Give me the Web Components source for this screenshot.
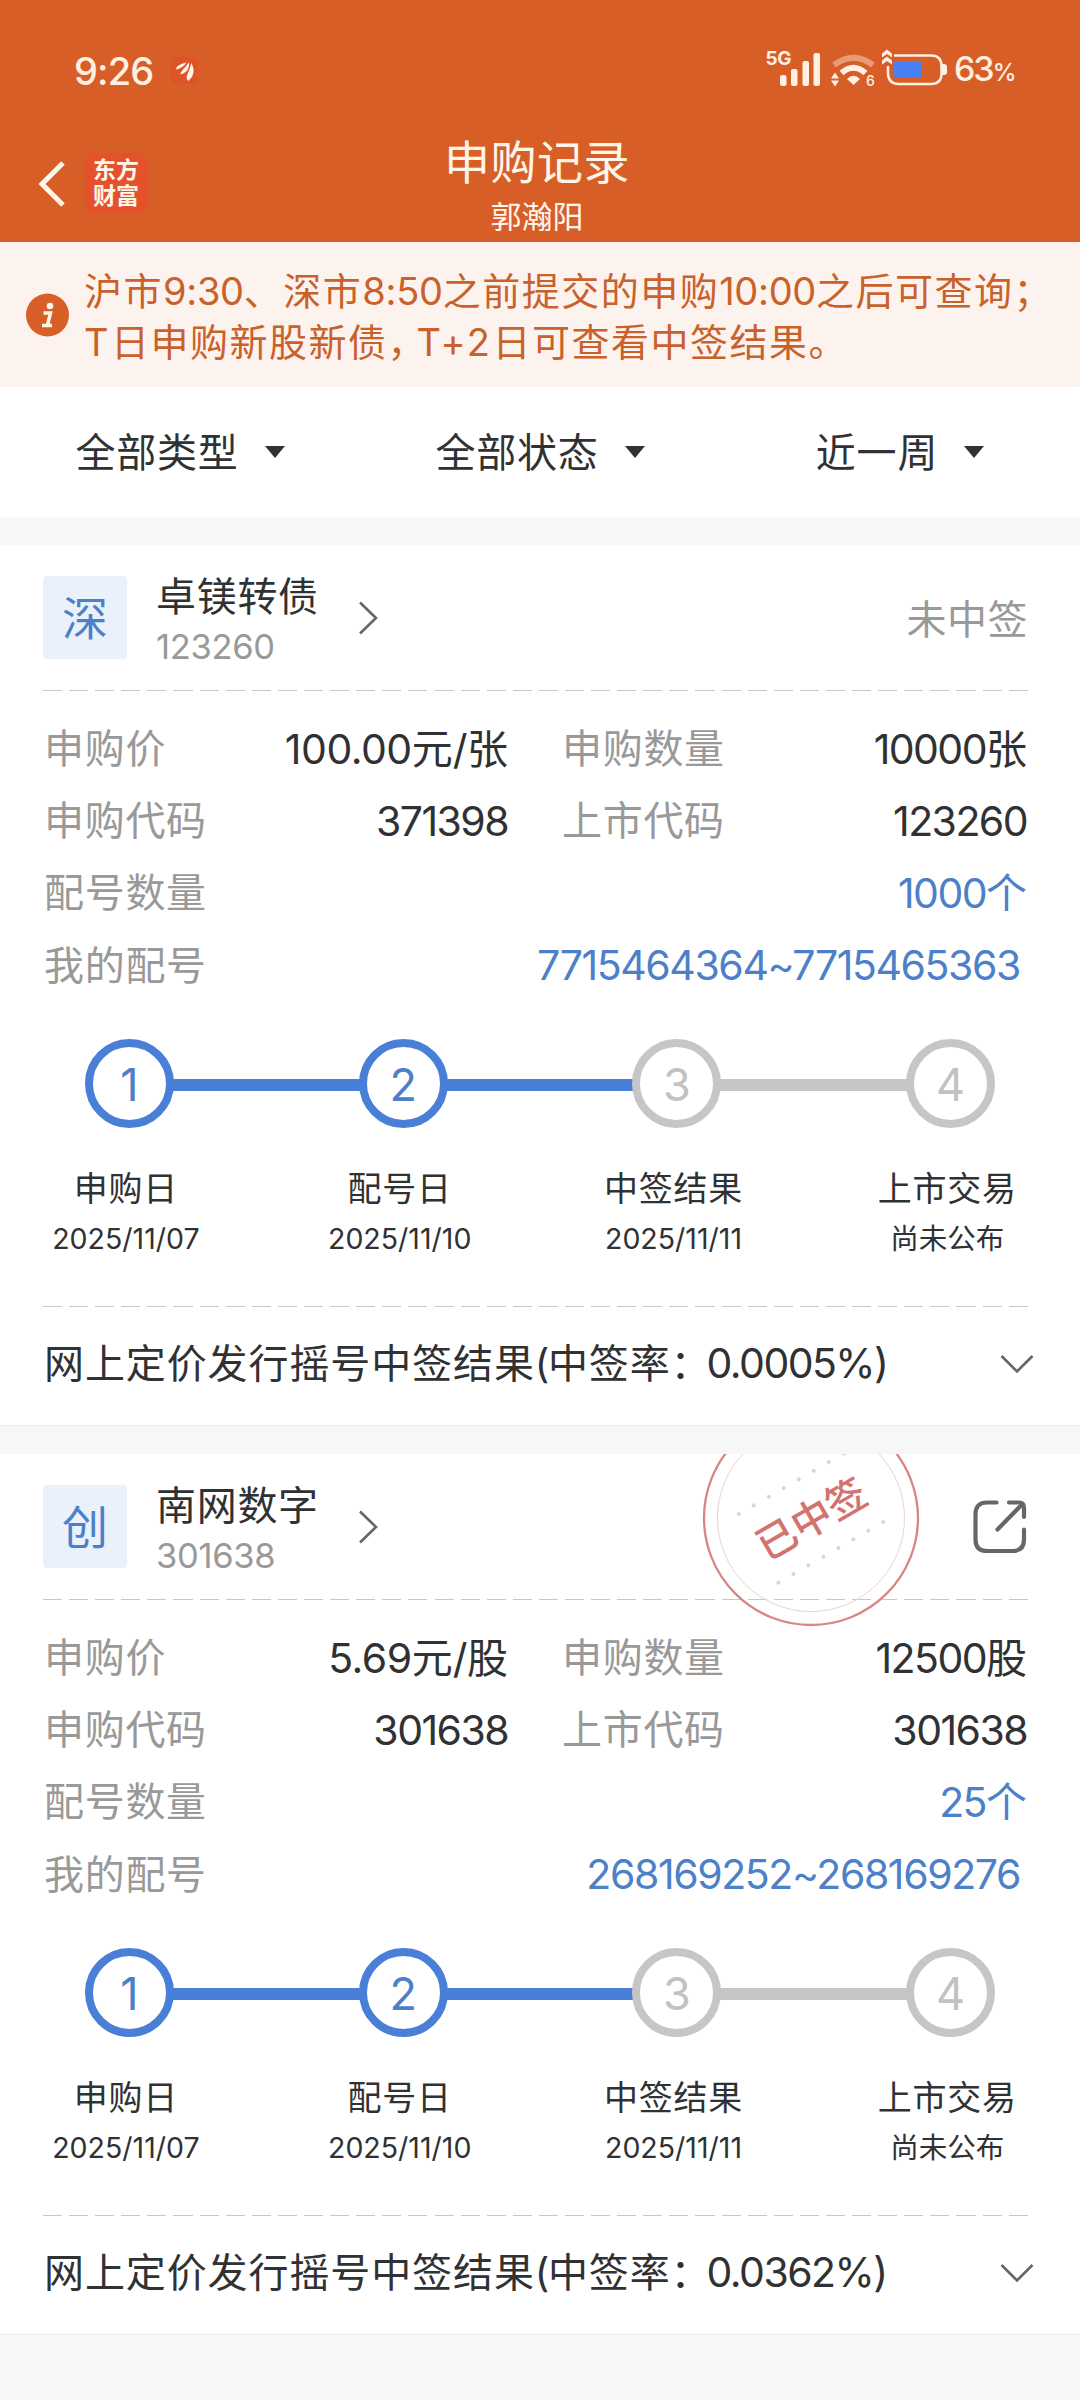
<!DOCTYPE html>
<html lang="zh-CN">
<head>
<meta charset="utf-8">
<title>申购记录</title>
<style>
  body{margin:0;width:1080px;height:2400px;overflow:hidden;background:#f6f7f9;color:#303133;font-family:Inter,"Noto Sans CJK SC",sans-serif;font-size:40px}
</style>
</head>
<body>
<status-bar time="9:26" level="63"></status-bar>
<nav-bar heading="申购记录">郭瀚阳</nav-bar>
<notice-bar>
  <notice-line>沪市9:30、深市8:50之前提交的申购10:00之后可查询；</notice-line>
  <notice-line class="wide">T日申购新股新债，T+2日可查看中签结果。</notice-line>
</notice-bar>
<filter-bar>
  <filter-item>全部类型</filter-item>
  <filter-item>全部状态</filter-item>
  <filter-item>近一周</filter-item>
</filter-bar>
<record-card market="深" name="卓镁转债" code="123260" price="100.00元/张" amount="10000张" apply="371398" listing="123260" count="1000个" numbers="7715464364~7715465363" rate="0.0005%">
  <span slot="status">未中签</span>
</record-card>
<record-card market="创" name="南网数字" code="301638" price="5.69元/股" amount="12500股" apply="301638" listing="301638" count="25个" numbers="268169252~268169276" rate="0.0362%">
  <win-stamp slot="stamp">已中签</win-stamp>
  <share-icon slot="status"></share-icon>
</record-card>

<script>
const NUM_CSS = `.n{letter-spacing:var(--num-ls,-.038em)}.p{letter-spacing:var(--punct-ls,-4px)}`;
const num = (s) => String(s).trim()
  .replace(/[\x21-\x7e]+/g, (m) => `<span class="n">${m}</span>`)
  .replace(/[，：]/g, (m) => `<span class="p">${m}</span>`);

class BaseElement extends HTMLElement {
  constructor() {
    super();
    this.attachShadow({ mode: "open" });
  }
  connectedCallback() {
    this.shadowRoot.innerHTML = `<style>${NUM_CSS}</style>` + this.render();
  }
  attr(name) {
    return this.getAttribute(name) ?? "";
  }
}

class StatusBar extends BaseElement {
  render() {
    return `
      <style>
        :host{display:flex;align-items:center;height:140px;box-sizing:border-box;padding:0 65px 0 74px;background:#d75f27;color:#fff0e2}
        .time{font-size:38px;font-weight:500;letter-spacing:-.9px;line-height:44px;padding-top:1px}
        .app{margin-left:18px}
        .icons{margin-left:auto}
        .pct{margin-left:4px;font-size:34px;font-weight:500;line-height:40px;white-space:nowrap;letter-spacing:-2px;padding-top:1px}
        .pct small{font-size:24px;letter-spacing:-1.500px}
        svg{display:block}
      </style>
      <span class="time">${this.attr("time")}</span>
      <svg class="app" width="27" height="27" viewBox="0 0 27 27">
        <rect width="27" height="27" rx="5" fill="#de5428"/>
        <path d="M5 12.500c0-4 6-6 10.500-7C13 9.500 9 12 5 12.500zM9.500 17.500c0-4 6-7 8-12.500 2 6-2 11-8 12.500zM17.500 24c-5-4 2-10 2.500-18 4.500 6 3 13-2.500 18z" fill="#fff4e8"/>
      </svg>
      <svg class="icons" width="190" height="50" viewBox="760 45 190 50" fill="#fff0e2">
        <text x="765.500" y="65" font-size="19" font-weight="700" letter-spacing="-.5">5G</text>
        <rect x="780" y="75" width="6.500" height="11" rx="2"/>
        <rect x="791" y="69" width="6.500" height="17" rx="2"/>
        <rect x="802.500" y="61" width="6.500" height="25" rx="2"/>
        <rect x="813.500" y="53" width="6.500" height="33" rx="2"/>
        <path d="M834 65q19.500-14.500 39 0" fill="none" stroke="#fff0e2" stroke-width="6" opacity=".42"/>
        <path d="M841.500 73q12-10.500 24 0" fill="none" stroke="#fff0e2" stroke-width="6"/>
        <path d="M847 79q6.500-6.500 13 0l-6.500 6z"/>
        <path d="M831 78.500l4-6 4 6zM831 80.500h8l-4 6z"/>
        <text x="866" y="86" font-size="14" font-weight="500">6</text>
        <path d="M894 55.500h37q10.500 0 10.500 10.500v7.500q0 10.500-10.500 10.500h-32q-11 0-11-11V66" fill="none" stroke="#fff0e2" stroke-width="2.500"/>
        <path d="M942 64h2q3 0 3 3v5q0 3-3 3h-2z"/>
        <path d="M882 53.500l5-4 5 4v4l-5-3.500-5 3.500zM882 60.500l5-4 5 4v4l-5-3.500-5 3.500z"/>
        <rect x="893.500" y="61" width="27.500" height="17" rx="2" fill="#4a80f5"/>
      </svg>
      <span class="pct">${this.attr("level")}<small>%</small></span>
    `;
  }
}

class NavBar extends BaseElement {
  render() {
    return `
      <style>
        :host{display:grid;grid-template-columns:1fr auto 1fr;height:102px;background:#d75f27;color:#fff6ea}
        .left{display:flex;align-items:flex-start;padding:13px 0 0 38px}
        .back{margin-top:7px}
        .logo{display:grid;align-content:center;justify-items:center;width:62px;height:60px;margin-left:19px;border-radius:8px;background:#e5512a;font-size:23px;font-weight:700;line-height:26.500px}
        .mid{text-align:center;padding-right:6px}
        .heading{font-size:46px;line-height:44px;letter-spacing:.5px}
        .sub{font-size:31px;line-height:44px;margin-top:11px}
      </style>
      <div class="left">
        <svg class="back" width="28" height="48" viewBox="0 0 28 48"><path d="M25 3L4 24l21 21" fill="none" stroke="#fff6ea" stroke-width="5"/></svg>
        <div class="logo"><span>东方</span><span>财富</span></div>
      </div>
      <div class="mid">
        <div class="heading">${this.attr("heading")}</div>
        <div class="sub"><slot></slot></div>
      </div>
    `;
  }
}

class NoticeBar extends BaseElement {
  render() {
    return `
      <style>
        :host{display:flex;align-items:center;height:145px;box-sizing:border-box;padding:0 0 0 26px;background:#fdf3ee;color:#c9612a}
        .lines{margin-left:14px;padding-top:4px}
      </style>
      <svg width="44" height="44" viewBox="0 0 44 44">
        <circle cx="21.500" cy="22" r="21.500" fill="#d85f27"/>
        <circle cx="24" cy="13" r="3.300" fill="#fff4ea"/>
        <path d="M17.500 20h7l-3 12M16 32.500h10" fill="none" stroke="#fff4ea" stroke-width="3.500"/>
      </svg>
      <div class="lines"><slot></slot></div>
    `;
  }
}

class NoticeLine extends BaseElement {
  render() {
    return `
      <style>
        :host{display:block;font-size:38px;line-height:51px;letter-spacing:1.500px;white-space:nowrap;--num-ls:-.3px}
        :host(.wide){--num-ls:2.400px;--punct-ls:-9px}
      </style>
      ${num(this.textContent)}
    `;
  }
}

class FilterBar extends BaseElement {
  render() {
    return `
      <style>
        :host{display:grid;grid-template-columns:repeat(3,1fr);height:130px;background:#fff;margin-bottom:28px}
      </style>
      <slot></slot>
    `;
  }
}

class FilterItem extends BaseElement {
  render() {
    return `
      <style>
        :host{display:flex;align-items:center;justify-content:center;gap:26px;line-height:60px;letter-spacing:.8px}
        span{padding-top:2px}
      </style>
      <span><slot></slot></span>
      <svg width="20" height="12" viewBox="0 0 20 12"><path d="M0 0h20L10 12z" fill="#303133"/></svg>
    `;
  }
}

class DashLine extends BaseElement {
  render() {
    return `
      <style>
        :host{display:block;height:1px;margin:0 51px 0 43px;background:repeating-linear-gradient(90deg,#c8c8c8 0 19px,transparent 19px 26.100px)}
      </style>
    `;
  }
}

class InfoCell extends BaseElement {
  render() {
    return `
      <style>
        :host{display:flex;justify-content:space-between;align-items:center;line-height:60px;white-space:nowrap}
        .label{color:#999;letter-spacing:.7px;padding-top:2px}
        .value{color:var(--value,#303133);font-size:41px;padding-top:1px}
      </style>
      <span class="label">${this.attr("label")}</span>
      <span class="value">${num(this.attr("value"))}</span>
    `;
  }
}

class StepTrack extends BaseElement {
  render() {
    const steps = [
      ["申购日", "2025/11/07"],
      ["配号日", "2025/11/10"],
      ["中签结果", "2025/11/11"],
      ["上市交易", "尚未公布"],
    ];
    const done = Number(this.attr("done"));
    const dots = steps.map((s, i) => `
      ${i ? `<div class="bar ${i <= done ? "on" : ""}"></div>` : ""}
      <div class="dot ${i < done ? "on" : ""}">${i + 1}</div>
    `).join("");
    return `
      <style>
        :host{display:block;height:267px}
        .track{display:flex;align-items:center;margin:0 85px 0 85px}
        .dot{display:grid;place-items:center;width:89px;height:89px;box-sizing:border-box;border:8.500px solid #c6c6c6;border-radius:50%;color:#c2c2c2;font-size:45px;line-height:72px;padding-top:2px}
        .dot.on{border-color:#4a7fd8;color:#4c80c8}
        .bar{flex:1;height:12px;margin:3px -2px 0;background:#c6c6c6}
        .bar.on{background:#4a7fd8}
        .names{display:grid;grid-template-columns:repeat(4,273.800px);margin:39px 0 0 -11px;text-align:center}
        .name{font-size:34px;line-height:44px;letter-spacing:.8px}
        .date{font-size:28.500px;line-height:40px;margin-top:8px;--num-ls:0px}
      </style>
      <div class="track">${dots}</div>
      <div class="names">
        ${steps.map(([name, date]) => `<div><div class="name">${name}</div><div class="date">${num(date)}</div></div>`).join("")}
      </div>
    `;
  }
}

class WinStamp extends BaseElement {
  render() {
    let dots = "";
    for (let i = 0; i < 8; i++) {
      const x = i * 17.3 - 60.500;
      dots += `<circle cx="${x}" cy="-39.500" r="2"/><circle cx="${x}" cy="39.700" r="2"/>`;
    }
    return `
      <style>
        :host{display:block;width:218px;height:218px}
        svg{display:block}
      </style>
      <svg width="218" height="218" viewBox="-109 -109 218 218">
        <circle r="107" fill="none" stroke="#d98583" stroke-width="2.300"/>
        <circle r="93.500" fill="none" stroke="#efd0d2" stroke-width="1"/>
        <g transform="rotate(-30)">
          <g fill="#dcd5d5">${dots}</g>
          <text x="0" y="15.500" text-anchor="middle" font-size="40" font-weight="500" fill="#d37370">${this.textContent}</text>
        </g>
      </svg>
    `;
  }
}

class ShareIcon extends BaseElement {
  render() {
    return `
      <style>
        :host{display:block;padding-right:1px}
        svg{display:block}
      </style>
      <svg width="54" height="54" viewBox="0 0 54 54" fill="none" stroke="#666" stroke-width="4.200" stroke-linecap="round">
        <path d="M23.500 2.500H14Q2.500 2.500 2.500 14v25.500Q2.500 51 14 51h25.500Q51 51 51 39.500V29.500"/>
        <path d="M36 2.500h10q5 0 5 5v9.500M49 4.500L24.500 29.500"/>
      </svg>
    `;
  }
}

class RecordCard extends BaseElement {
  render() {
    return `
      <style>
        :host{display:block;position:relative;height:880px;margin-bottom:28px;background:#fff;border-bottom:1px solid #ededef;overflow:hidden}
        .head{display:flex;align-items:flex-start;height:145px;box-sizing:border-box;padding:31px 52px 0 43px}
        .market{display:grid;place-items:center;width:84px;height:83px;border-radius:4px;background:#eaf1fb;color:#4c80c8;font-size:46px;line-height:80px}
        .title{width:175px;margin-left:29px;white-space:nowrap}
        .name{line-height:44px;margin-top:-1px;letter-spacing:.7px}
        .code{font-size:34.500px;line-height:40px;margin-top:8px;color:#999;--num-ls:-.3px}
        .go{margin:25px 0 0 27px}
        .status{margin:16px 0 0 auto;color:#999;line-height:56px;letter-spacing:.5px}
        ::slotted(share-icon){margin-top:-1px}
        .stamp{position:absolute;left:702px;top:-45px}
        .rows{display:grid;grid-template-columns:464px 465px;column-gap:54px;grid-auto-rows:72.200px;padding:21px 0 38px 44px}
        .price{--num-ls:-.5px}
        .wide{grid-column:1/-1;--value:#4c80c8}
        .last{margin-right:7px;--num-ls:-1.400px}
        .foot{display:flex;align-items:center;justify-content:space-between;height:114px;padding:0 46px 0 44px;letter-spacing:.9px;line-height:60px;white-space:nowrap}
        .foot b{font-weight:400;font-size:41px}
      </style>
      <div class="head">
        <div class="market">${this.attr("market")}</div>
        <div class="title">
          <div class="name">${this.attr("name")}</div>
          <div class="code">${num(this.attr("code"))}</div>
        </div>
        <svg class="go" width="21" height="34" viewBox="0 0 21 34"><path d="M2 1.500L18 17 2 32.500" fill="none" stroke="#666" stroke-width="2.600"/></svg>
        <div class="status"><slot name="status"></slot></div>
      </div>
      <dash-line></dash-line>
      <div class="rows">
        <info-cell class="price" label="申购价" value="${this.attr("price")}"></info-cell>
        <info-cell label="申购数量" value="${this.attr("amount")}"></info-cell>
        <info-cell label="申购代码" value="${this.attr("apply")}"></info-cell>
        <info-cell label="上市代码" value="${this.attr("listing")}"></info-cell>
        <info-cell class="wide" label="配号数量" value="${this.attr("count")}"></info-cell>
        <info-cell class="wide last" label="我的配号" value="${this.attr("numbers")}"></info-cell>
      </div>
      <step-track done="2"></step-track>
      <dash-line></dash-line>
      <div class="foot">
        <span>${num("网上定价发行摇号中签结果(中签率：")}<b>${num(this.attr("rate") + ")")}</b></span>
        <svg width="34" height="20" viewBox="0 0 34 20"><path d="M1.500 2L17 17.500 32.500 2" fill="none" stroke="#666" stroke-width="2.600"/></svg>
      </div>
      <div class="stamp"><slot name="stamp"></slot></div>
    `;
  }
}

customElements.define("status-bar", StatusBar);
customElements.define("nav-bar", NavBar);
customElements.define("notice-bar", NoticeBar);
customElements.define("notice-line", NoticeLine);
customElements.define("filter-bar", FilterBar);
customElements.define("filter-item", FilterItem);
customElements.define("dash-line", DashLine);
customElements.define("info-cell", InfoCell);
customElements.define("step-track", StepTrack);
customElements.define("win-stamp", WinStamp);
customElements.define("share-icon", ShareIcon);
customElements.define("record-card", RecordCard);
</script>
</body>
</html>
